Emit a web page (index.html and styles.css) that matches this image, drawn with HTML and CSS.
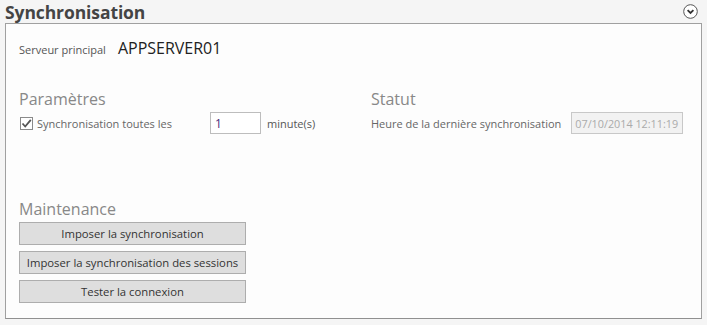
FILE: index.html
```html
<!DOCTYPE html>
<html lang="fr">

<head>
    <meta charset="UTF-8">
    <title>Synchronisation</title>
    <link rel="stylesheet" href="styles.css">
</head>

<body>
    <div class="section-header">
        <h1>Synchronisation</h1>
        <span class="collapse-btn">
            <svg width="15" height="15" viewBox="0 0 15 15">
                <circle cx="7.5" cy="7.5" r="6.8" fill="#fff" stroke="#555" stroke-width="1"/>
                <path d="M4.6 6.2 L7.5 9 L10.4 6.2" fill="none" stroke="#333" stroke-width="1.8"/>
            </svg>
        </span>
    </div>

    <div class="panel">
        <div class="server-row">
            <span class="label">Serveur principal</span>
            <span class="server-name">APPSERVER01</span>
        </div>

        <div class="columns">
            <div class="group params">
                <h2>Paramètres</h2>
                <div class="row">
                    <label class="check-label">
                        <span class="checkbox">
                            <svg width="11" height="11" viewBox="0 0 11 11">
                                <path d="M1.5 5.5 L4.2 8.5 L9.8 1.8" fill="none" stroke="#555" stroke-width="1.8"/>
                            </svg>
                        </span>
                        Synchronisation toutes les
                    </label>
                    <input class="text-input" type="text" value="1">
                    <span class="label">minute(s)</span>
                </div>
            </div>

            <div class="group status">
                <h2>Statut</h2>
                <div class="row">
                    <span class="label">Heure de la dernière synchronisation</span>
                    <input class="text-input disabled" type="text" value="07/10/2014 12:11:19" disabled>
                </div>
            </div>
        </div>

        <div class="group maintenance">
            <h2>Maintenance</h2>
            <div class="buttons">
                <button>Imposer la synchronisation</button>
                <button>Imposer la synchronisation des sessions</button>
                <button>Tester la connexion</button>
            </div>
        </div>
    </div>
</body>

</html>
```

FILE: styles.css
```css
body {
    margin: 0;
    padding: 0 5px;
    background-color: #f5f5f5;
    font-family: "Open Sans", "Noto Sans", sans-serif;
    font-size: 11px;
    color: #444;
}

.section-header {
    display: flex;
    justify-content: space-between;
    align-items: center;
    height: 23px;
}

.section-header h1 {
    margin: 0;
    font-size: 17.5px;
    font-weight: bold;
    color: #444;
    letter-spacing: -0.1px;
}

.collapse-btn {
    display: flex;
    margin-right: 4px;
}

.panel {
    box-sizing: border-box;
    height: 296px;
    padding: 0 13px;
    background-color: #fdfdfd;
    border: 1px solid #a0a0a0;
    border-bottom-color: #909090;
}

.server-row {
    display: flex;
    align-items: baseline;
    gap: 12px;
    margin-top: 13px;
}

.server-name {
    font-size: 16px;
    color: #222;
}

.label {
    color: #555;
}

.columns {
    display: flex;
    margin-top: 29px;
}

.params {
    width: 352px;
    flex-shrink: 0;
}

.status {
    flex-shrink: 0;
}

.group h2 {
    margin: 0 0 2px;
    font-size: 16px;
    font-weight: normal;
    color: #888;
}

.row {
    display: flex;
    align-items: center;
}

.check-label {
    display: flex;
    align-items: center;
    gap: 4px;
    width: 191px;
    color: #666;
}

.checkbox {
    display: flex;
    align-items: center;
    justify-content: center;
    width: 11px;
    height: 11px;
    border: 1px solid #8a8a8a;
    background-color: #fff;
    margin-left: 1px;
}

.text-input {
    box-sizing: border-box;
    width: 51px;
    height: 22px;
    padding: 0 4px;
    border: 1px solid #bdbdbd;
    font-family: inherit;
    font-size: 12px;
    color: #4b2a7a;
    background-color: #fff;
    margin-right: 6px;
}

.status .label {
    margin-right: 10px;
    color: #666;
}

.text-input.disabled {
    width: 112px;
    padding: 0 1px 0 3px;
    font-size: 10.8px;
    color: #aaa;
    background-color: #f2f2f2;
    border-color: #c8c8c8;
}

.maintenance {
    margin-top: 64px;
}

.buttons {
    display: flex;
    flex-direction: column;
    gap: 6px;
    width: 227px;
}

button {
    height: 23px;
    padding: 0;
    font-family: inherit;
    font-size: 11.3px;
    color: #333;
    background-color: #dedede;
    border: 1px solid #adadad;
}
```
